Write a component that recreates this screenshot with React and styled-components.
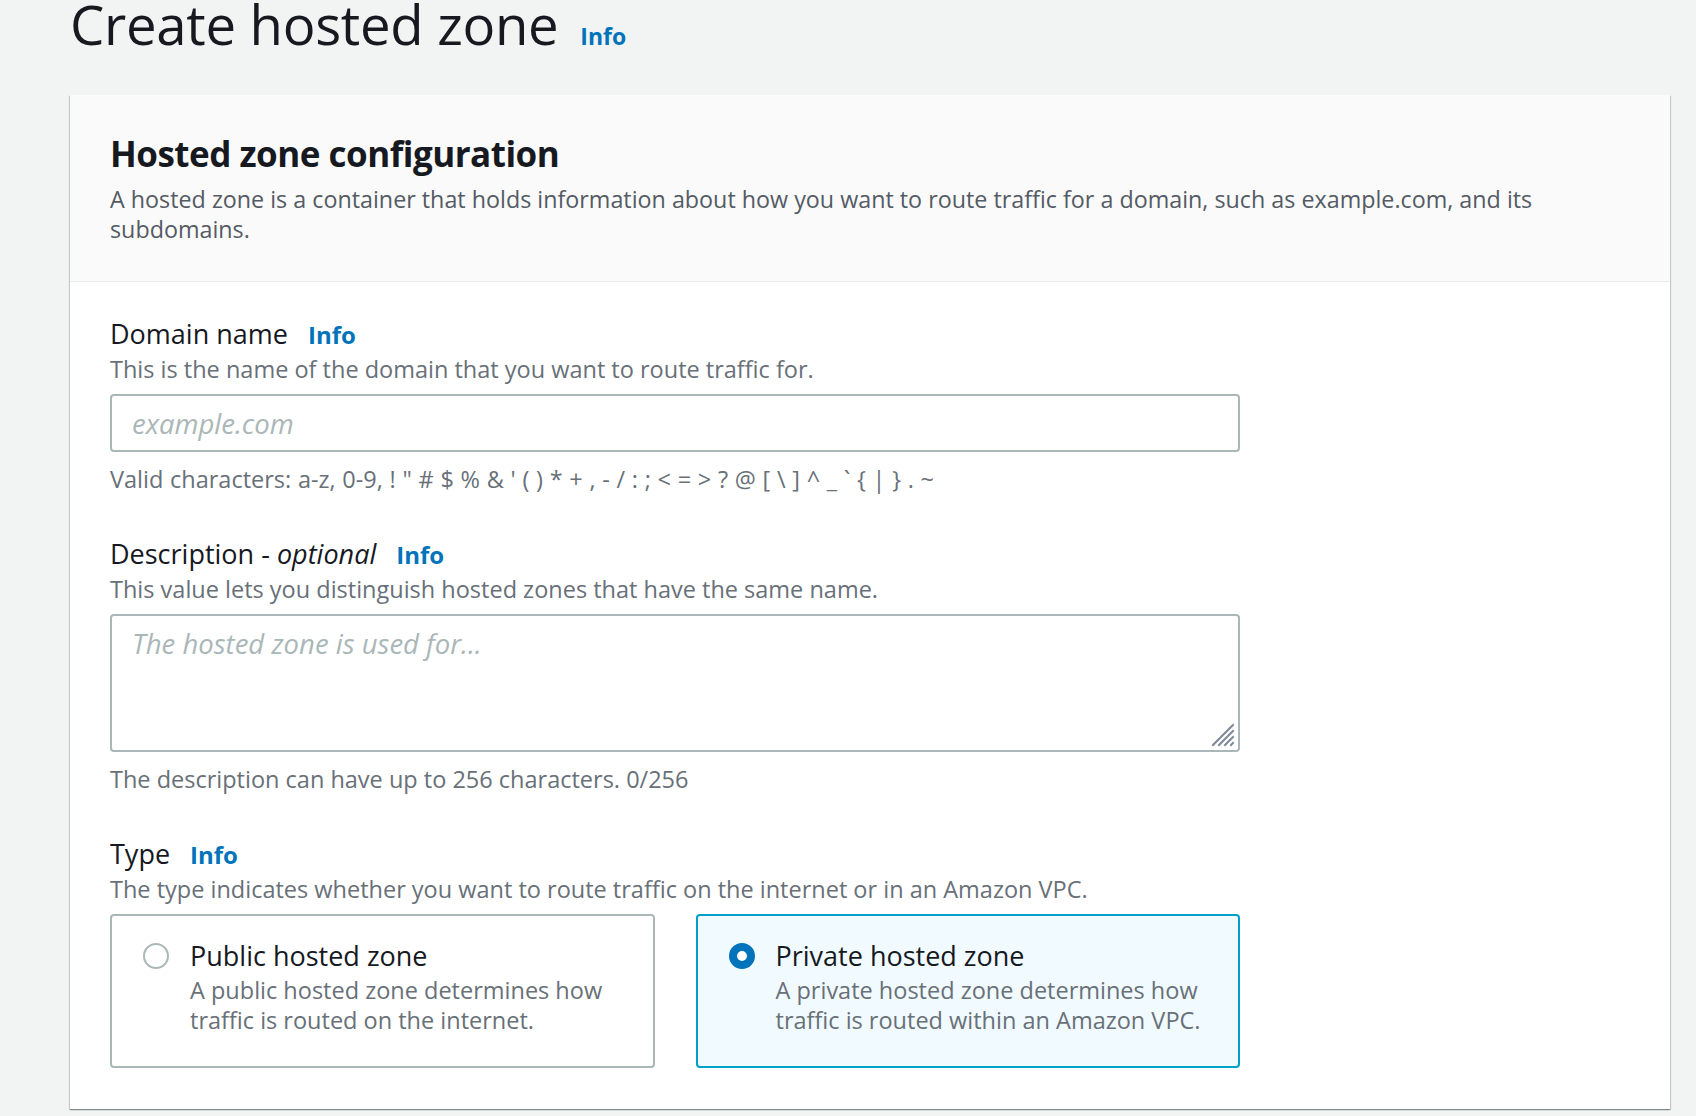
import React from "react";
import styled, { createGlobalStyle } from "styled-components";

const GlobalStyle = createGlobalStyle`
  html, body { margin: 0; padding: 0; }
  body {
    background: #f2f3f3;
    font-family: "Open Sans", "Noto Sans", sans-serif;
    color: #16191f;
    min-height: 100vh;
  }
  * { box-sizing: border-box; }
`;

const Page = styled.div`
  padding: 0 26px 9px 70px;
  overflow: hidden;
`;

const TitleRow = styled.div`
  display: flex;
  align-items: baseline;
  gap: 22px;
  margin-top: -6px;
`;

const Title = styled.h1`
  margin: 0;
  font-size: 54.5px;
  line-height: 60px;
  font-weight: 400;
  color: #16191f;
  letter-spacing: -0.3px;
`;

const InfoLink = styled.a`
  font-size: ${(p) => p.$size || 24}px;
  font-weight: 700;
  color: #0073bb;
  text-decoration: none;
  cursor: pointer;
`;

const Card = styled.section`
  margin-top: 41px;
  background: #ffffff;
  box-shadow: 0 1px 1px 0 rgba(0, 28, 36, 0.3),
    1px 1px 1px 0 rgba(0, 28, 36, 0.15), -1px 1px 1px 0 rgba(0, 28, 36, 0.15);
`;

const CardHeader = styled.header`
  background: #fafafa;
  border-bottom: 1px solid #eaeded;
  padding: 37px 40px 37px 40px;
`;

const CardTitle = styled.h2`
  margin: 0;
  font-size: 35px;
  line-height: 44px;
  font-weight: 700;
  letter-spacing: -0.5px;
  color: #16191f;
`;

const CardDescription = styled.p`
  margin: 8px 0 0;
  max-width: 1470px;
  font-size: 23.3px;
  line-height: 30px;
  color: #545b64;
`;

const CardBody = styled.div`
  padding: 36px 40px 41px 40px;
  display: flex;
  flex-direction: column;
  gap: 44px;
`;

const Field = styled.div`
  width: 1130px;
  display: flex;
  flex-direction: column;
`;

const LabelRow = styled.div`
  display: flex;
  align-items: baseline;
  gap: 20px;
`;

const Label = styled.label`
  font-size: 27px;
  line-height: 32px;
  color: #16191f;
  em { font-style: italic; }
`;

const Help = styled.div`
  margin-top: 3px;
  font-size: 23.5px;
  line-height: 30px;
  color: #687078;
`;

const Constraint = styled.div`
  margin-top: 12px;
  font-size: 23.5px;
  line-height: 30px;
  color: #687078;
  word-spacing: ${(p) => p.$wordSpacing || 0}px;
`;

const TextInput = styled.input`
  margin-top: 10px;
  width: 100%;
  height: 58px;
  border: 2px solid #aab7b8;
  border-radius: 4px;
  padding: 0 20px;
  font-family: inherit;
  font-size: 27.5px;
  color: #16191f;
  background: #fff;
  outline: none;
  &::placeholder {
    color: #aab7b8;
    font-style: italic;
  }
`;

const TextAreaWrap = styled.div`
  position: relative;
  margin-top: 10px;
`;

const TextArea = styled.textarea`
  display: block;
  width: 100%;
  height: 138px;
  border: 2px solid #aab7b8;
  border-radius: 4px;
  padding: 12px 20px;
  font-family: inherit;
  font-size: 27.5px;
  line-height: 32px;
  color: #16191f;
  background: #fff;
  outline: none;
  resize: none;
  &::placeholder {
    color: #aab7b8;
    font-style: italic;
  }
`;

const Grip = styled.svg`
  position: absolute;
  right: 4px;
  bottom: 4px;
  width: 26px;
  height: 26px;
  pointer-events: none;
`;

const Tiles = styled.div`
  margin-top: 10px;
  display: grid;
  grid-template-columns: 1fr 1fr;
  gap: 41px;
`;

const Tile = styled.label`
  display: flex;
  align-items: flex-start;
  gap: 21px;
  height: 154px;
  padding: 24px 14px 0 31px;
  border: 2px solid ${(p) => (p.$selected ? "#00a1c9" : "#aab7b8")};
  background: ${(p) => (p.$selected ? "#f1faff" : "#ffffff")};
  border-radius: 4px;
  cursor: pointer;
`;

const Radio = styled.span`
  flex: none;
  width: 26px;
  height: 26px;
  margin-top: 3px;
  border-radius: 50%;
  background: #fff;
  border: ${(p) => (p.$checked ? "8px solid #0073bb" : "2px solid #aab7b8")};
`;

const TileText = styled.div`
  display: flex;
  flex-direction: column;
`;

const TileTitle = styled.div`
  font-size: 27px;
  line-height: 32px;
  color: #16191f;
`;

const TileDesc = styled.div`
  margin-top: 3px;
  font-size: 23.5px;
  line-height: 30px;
  color: #687078;
`;

const types = [
  {
    id: "public",
    title: "Public hosted zone",
    desc: "A public hosted zone determines how traffic is routed on the internet.",
  },
  {
    id: "private",
    title: "Private hosted zone",
    desc: "A private hosted zone determines how traffic is routed within an Amazon VPC.",
  },
];

export default function App() {
  const [type, setType] = React.useState("private");
  return (
    <>
      <GlobalStyle />
      <Page>
        <TitleRow>
          <Title>Create hosted zone</Title>
          <InfoLink $size={23}>Info</InfoLink>
        </TitleRow>
        <Card>
          <CardHeader>
            <CardTitle>Hosted zone configuration</CardTitle>
            <CardDescription>
              A hosted zone is a container that holds information about how you
              want to route traffic for a domain, such as example.com, and its
              subdomains.
            </CardDescription>
          </CardHeader>
          <CardBody>
            <Field>
              <LabelRow>
                <Label htmlFor="domain">Domain name</Label>
                <InfoLink>Info</InfoLink>
              </LabelRow>
              <Help>This is the name of the domain that you want to route traffic for.</Help>
              <TextInput id="domain" placeholder="example.com" />
              <Constraint $wordSpacing={0.6}>
                Valid characters: a-z, 0-9, ! " # $ % &amp; ' ( ) * + , - / : ; &lt; = &gt; ? @ [ \ ] ^ _ ` {"{"} | {"}"} . ~
              </Constraint>
            </Field>
            <Field>
              <LabelRow>
                <Label htmlFor="desc">
                  Description - <em>optional</em>
                </Label>
                <InfoLink>Info</InfoLink>
              </LabelRow>
              <Help>This value lets you distinguish hosted zones that have the same name.</Help>
              <TextAreaWrap>
                <TextArea id="desc" placeholder="The hosted zone is used for..." />
                <Grip viewBox="0 0 26 26">
                  <g stroke="#7d8998" strokeWidth="2" strokeLinecap="square">
                    <line x1="3" y1="23" x2="23" y2="3" />
                    <line x1="9" y1="23" x2="23" y2="9" />
                    <line x1="15" y1="23" x2="23" y2="15" />
                    <line x1="21" y1="23" x2="23" y2="21" />
                  </g>
                </Grip>
              </TextAreaWrap>
              <Constraint>The description can have up to 256 characters. 0/256</Constraint>
            </Field>
            <Field>
              <LabelRow>
                <Label>Type</Label>
                <InfoLink>Info</InfoLink>
              </LabelRow>
              <Help>The type indicates whether you want to route traffic on the internet or in an Amazon VPC.</Help>
              <Tiles>
                {types.map((t) => (
                  <Tile
                    key={t.id}
                    $selected={type === t.id}
                    onClick={() => setType(t.id)}
                  >
                    <Radio $checked={type === t.id} />
                    <TileText>
                      <TileTitle>{t.title}</TileTitle>
                      <TileDesc>{t.desc}</TileDesc>
                    </TileText>
                  </Tile>
                ))}
              </Tiles>
            </Field>
          </CardBody>
        </Card>
      </Page>
    </>
  );
}
